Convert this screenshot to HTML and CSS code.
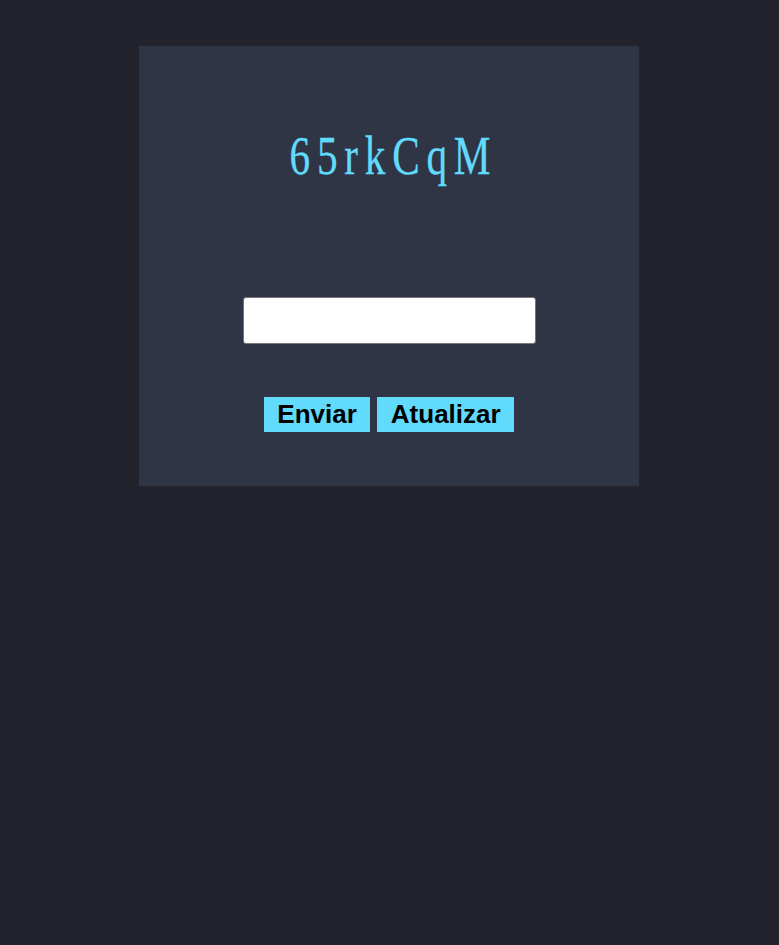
FILE: index.html
```html
<!DOCTYPE html>
<html>
<head>
<meta charset="utf-8">
<link rel="stylesheet" href="styles.css">
</head>
<body>
<div class="card">
  <div class="captcha"><span class="captcha-text">65rkCqM</span></div>
  <input class="answer" type="text">
  <div class="actions">
    <button class="btn">Enviar</button>
    <button class="btn">Atualizar</button>
  </div>
</div>
</body>
</html>
```
FILE: styles.css
```css
html, body {
  margin: 0;
  padding: 0;
  background: #23232e;
  height: 100%;
}
body {
  display: flex;
  flex-direction: column;
  align-items: center;
  padding-top: 46px;
  box-sizing: border-box;
}
.card {
  width: 500px;
  height: 440px;
  margin-right: 1px;
  background: #2f3545;
  display: flex;
  flex-direction: column;
  align-items: center;
  box-sizing: border-box;
}
.captcha {
  height: 251px;
  display: flex;
  justify-content: center;
  padding-top: 80px;
  box-sizing: border-box;
  width: 100%;
}
.captcha-text {
  display: inline-block;
  font-family: "Liberation Serif", serif;
  font-size: 55px;
  line-height: 60px;
  height: 60px;
  color: #61dafb;
  letter-spacing: 9px;
  margin-left: 9px;
  -webkit-text-stroke: 0.3px #61dafb;
  transform: scaleX(0.75);
  transform-origin: center;
  white-space: nowrap;
}
.answer {
  width: 293px;
  height: 47px;
  box-sizing: border-box;
  border: 1px solid #767676;
  border-radius: 3px;
  background: #fff;
  margin: 0;
}
.actions {
  display: flex;
  gap: 7px;
  margin-top: 53px;
}
.btn {
  font-family: "Liberation Sans", Arial, sans-serif;
  font-weight: bold;
  font-size: 26px;
  color: #000;
  background: #61dafb;
  border: none;
  height: 35px;
  padding: 0 13.5px;
  margin: 0;
  line-height: 35px;
}
```
